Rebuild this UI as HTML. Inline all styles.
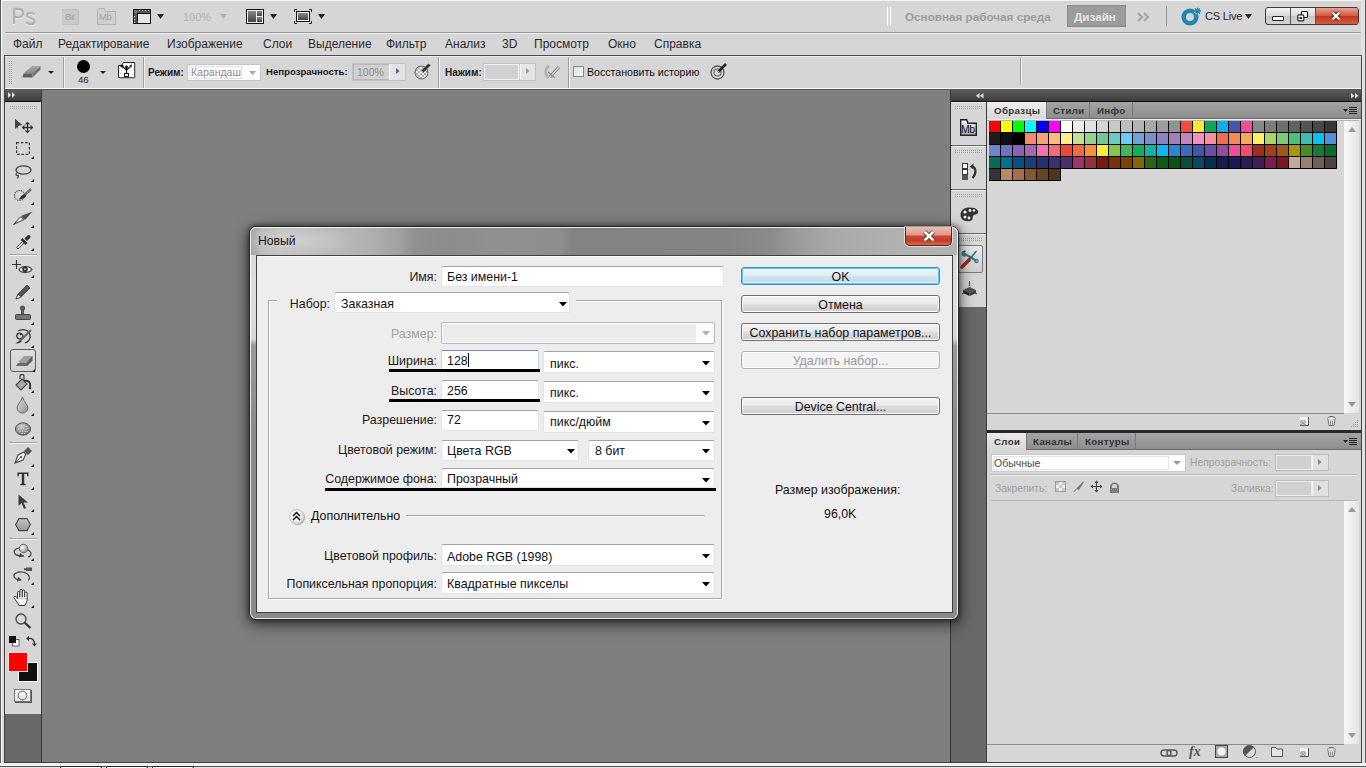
<!DOCTYPE html>
<html><head><meta charset="utf-8">
<style>
*{margin:0;padding:0;box-sizing:border-box}
html,body{width:1366px;height:768px;overflow:hidden;background:#d6d6d6;font-family:"Liberation Sans",sans-serif;color:#000}
.a{position:absolute}
.t{position:absolute;white-space:nowrap;line-height:1}
svg{position:absolute;overflow:visible}
</style></head><body>
<!-- frame -->
<div class="a" style="left:0;top:0;width:1366px;height:768px;background:#d6d6d6"></div>
<div class="a" style="left:0;top:0;width:1366px;height:1px;background:#f4f4f4"></div>
<div class="a" style="left:0;top:0;width:1px;height:768px;background:#5a5a5a"></div>
<div class="a" style="left:1px;top:1px;width:4px;height:767px;background:#dadada;border-left:1px solid #f8f8f8"></div>
<div class="a" style="left:1361px;top:0;width:5px;height:768px;background:#e2e2e2"></div>
<div class="a" style="left:1365px;top:0;width:1px;height:768px;background:#5a5a5a"></div>
<!-- app bar -->
<div class="a" style="left:5px;top:1px;width:1356px;height:31px;background:#d6d6d6"></div>
<div class="a" style="left:5px;top:32px;width:1356px;height:1px;background:#9a9a9a"></div>
<div class="a" style="left:5px;top:33px;width:1356px;height:1px;background:#ececec"></div>
<!-- menu bar -->
<div class="a" style="left:5px;top:34px;width:1356px;height:21px;background:#d6d6d6"></div>
<!-- options bar -->
<div class="a" style="left:4px;top:55px;width:1358px;height:35px;background:#d6d6d6;border:1px solid #4a4a4a;border-bottom:none"></div>
<div class="a" style="left:5px;top:56px;width:1356px;height:1px;background:#ececec"></div>
<div class="a" style="left:5px;top:88px;width:1356px;height:1px;background:#f6f6f6"></div>
<!-- workspace -->
<div class="a" style="left:4px;top:89px;width:1358px;height:674px;background:#7f7f7f;border:1px solid #404040;border-top-color:#555"></div>
<div class="a" style="left:0;top:763px;width:1366px;height:3px;background:#f0f0f0"></div>
<div class="a" style="left:0;top:766px;width:1366px;height:2px;background:#e4e4e4;border-top:1px solid #555"></div>
<div class="a" style="left:60px;top:766px;width:42px;height:2px;background:#fafafa;border:1px solid #222;border-bottom:none;border-radius:2px 2px 0 0"></div>
<div class="a" style="left:106px;top:766px;width:42px;height:2px;background:#fafafa;border:1px solid #222;border-bottom:none;border-radius:2px 2px 0 0"></div>
<div class="a" style="left:152px;top:766px;width:42px;height:2px;background:#fafafa;border:1px solid #222;border-bottom:none;border-radius:2px 2px 0 0"></div>
<!-- left dock -->
<div class="a" style="left:5px;top:90px;width:36px;height:11px;background:linear-gradient(#5c5c5c,#3c3c3c)"></div>
<div class="a" style="left:5px;top:101px;width:36px;height:1px;background:#111"></div>
<div class="a" style="left:5px;top:102px;width:36px;height:660px;background:#686868"></div>
<div class="a" style="left:41px;top:90px;width:1px;height:672px;background:#3a3a3a"></div>
<div class="a" style="left:5px;top:102px;width:36px;height:612px;background:#d6d6d6"></div>
<!-- right dock -->
<div class="a" style="left:950px;top:90px;width:411px;height:11px;background:linear-gradient(#5c5c5c,#3c3c3c)"></div>
<div class="a" style="left:950px;top:101px;width:411px;height:1px;background:#111"></div>
<div class="a" style="left:950px;top:90px;width:1px;height:672px;background:#333"></div>
<div class="a" style="left:951px;top:102px;width:36px;height:660px;background:#686868"></div>
<div class="a" style="left:986px;top:102px;width:1px;height:660px;background:#3a3a3a"></div>
<div class="a" style="left:987px;top:102px;width:374px;height:660px;background:#d6d6d6"></div><!-- APPBAR CONTENT -->
<svg style="left:11px;top:7px" width="26" height="19"><g fill="none" stroke-width="2.3" stroke-linecap="butt"><path transform="translate(0,1)" d="M3 17V2H7.5C10.5 2 12 3.5 12 6C12 8.5 10.5 10 7.5 10H3" stroke="#eeeeee"/><path transform="translate(0,1)" d="M23.5 7.5C22.5 6.3 21 5.8 19.5 5.8C17.3 5.8 16 6.8 16 8.3C16 11.5 23.5 10.5 23.5 14.2C23.5 15.9 22 17 19.5 17C17.8 17 16.2 16.4 15.3 15.3" stroke="#eeeeee"/><path d="M3 17V2H7.5C10.5 2 12 3.5 12 6C12 8.5 10.5 10 7.5 10H3" stroke="#b2b2b2"/><path d="M23.5 7.5C22.5 6.3 21 5.8 19.5 5.8C17.3 5.8 16 6.8 16 8.3C16 11.5 23.5 10.5 23.5 14.2C23.5 15.9 22 17 19.5 17C17.8 17 16.2 16.4 15.3 15.3" stroke="#b2b2b2"/></g></svg>
<div class="a" style="left:62px;top:9px;width:16px;height:15px;background:#c9c9c9;border-top:1px solid #bdbdbd;box-shadow:1px 1px 0 #bfbfbf"></div>
<div class="t" style="left:65px;top:13px;font-size:9px;font-weight:bold;color:#a8a8a8">Br</div>
<svg style="left:97px;top:8px" width="19" height="17"><path d="M0.5 2.5 V16.5 H18.5 V3.5 H8.5 L7.5 0.5 H1.5 Z" fill="#d0d0d0" stroke="#b2b2b2"/></svg>
<div class="t" style="left:99px;top:12px;font-size:9.5px;color:#a6a6a6;letter-spacing:-0.5px">Mb</div>
<svg style="left:133px;top:9px" width="19" height="16"><rect x="0" y="0" width="18" height="15" fill="#111"/><rect x="1" y="1" width="16" height="3" fill="#555"/><rect x="1" y="1" width="3" height="13" fill="#555"/><rect x="5" y="5" width="12" height="9" fill="#e6e6e6"/><g fill="#eee"><rect x="6" y="1" width="1" height="1"/><rect x="9" y="1" width="1" height="1"/><rect x="12" y="1" width="1" height="1"/><rect x="15" y="1" width="1" height="1"/><rect x="1" y="7" width="1" height="1"/><rect x="1" y="10" width="1" height="1"/><rect x="1" y="13" width="1" height="1"/></g><rect x="1" y="1" width="3" height="3" fill="#777"/></svg>
<svg style="left:157px;top:14px" width="8" height="6"><path d="M0 0H7L3.5 5Z" fill="#222"/></svg>
<div class="t" style="left:183px;top:12px;font-size:11px;color:#b3b3b3">100%</div>
<svg style="left:220px;top:14px" width="8" height="6"><path d="M0 0H7L3.5 5Z" fill="#b0b0b0"/></svg>
<svg style="left:246px;top:9px" width="19" height="16"><rect x="0.5" y="0.5" width="17" height="14" fill="#eee" stroke="#111"/><rect x="2" y="2" width="8" height="11" fill="url(#g1)"/><rect x="11" y="2" width="5" height="5" fill="url(#g1)"/><rect x="11" y="8" width="5" height="5" fill="url(#g1)"/></svg>
<svg style="left:270px;top:14px" width="8" height="6"><path d="M0 0H7L3.5 5Z" fill="#222"/></svg>
<svg style="left:294px;top:9px" width="19" height="16"><path d="M0.5 3V0.5H3M15 0.5H17.5V3M17.5 12V14.5H15M3 14.5H0.5V12" fill="none" stroke="#222"/><rect x="2.5" y="2.5" width="13" height="10" fill="#eee" stroke="#111"/><rect x="4" y="4" width="10" height="7" fill="url(#g1)"/></svg>
<svg style="left:318px;top:14px" width="8" height="6"><path d="M0 0H7L3.5 5Z" fill="#222"/></svg>
<svg width="0" height="0"><defs><linearGradient id="g1" x1="0" y1="0" x2="0" y2="1"><stop offset="0" stop-color="#888"/><stop offset="1" stop-color="#444"/></linearGradient></defs></svg>
<div class="a" style="left:887px;top:7px;width:1px;height:19px;background:#fafafa"></div>
<div class="a" style="left:890px;top:7px;width:1px;height:19px;background:#fafafa"></div>
<div class="t" style="left:905px;top:11px;font-size:11.7px;font-weight:bold;color:#9b9b9b">Основная рабочая среда</div>
<div class="a" style="left:1067px;top:5px;width:59px;height:22px;background:#9c9c9c;border:1px solid #8a8a8a"></div>
<div class="t" style="left:1074px;top:11px;font-size:11.7px;font-weight:bold;color:#e6e6e6">Дизайн</div>
<svg style="left:1137px;top:12px" width="15" height="10"><path d="M1 1L5 5L1 9M7 1L11 5L7 9" fill="none" stroke="#a6a6a6" stroke-width="2.2"/></svg>
<div class="a" style="left:1166px;top:6px;width:1px;height:20px;background:#9a9a9a"></div>
<svg style="left:1180px;top:6px" width="24" height="20"><circle cx="10" cy="11" r="6.3" fill="none" stroke="#1f86b0" stroke-width="4.6"/><circle cx="17.5" cy="5" r="3.6" fill="#d6d6d6"/><path d="M17.5 1.5V8.5M14 5H21M15 2.5L20 7.5M20 2.5L15 7.5" stroke="#1f86b0" stroke-width="1.3"/></svg>
<div class="t" style="left:1205px;top:11px;font-size:11px;color:#222;letter-spacing:-0.2px">CS Live</div>
<svg style="left:1245px;top:14px" width="8" height="6"><path d="M0 0H7L3.5 5Z" fill="#222"/></svg>
<div class="a" style="left:1265px;top:7px;width:94px;height:18px;border:1px solid #3c3c3c;border-radius:3px;overflow:hidden;background:linear-gradient(#f4f4f4,#d8d8d8 50%,#c6c6c6 51%,#d4d4d4)">
  <div class="a" style="left:24px;top:0;width:1px;height:16px;background:#555"></div>
  <div class="a" style="left:49px;top:0;width:1px;height:16px;background:#555"></div>
  <div class="a" style="left:50px;top:0;width:42px;height:16px;background:linear-gradient(#e8a193,#d2553f 50%,#c2351f 51%,#d0603c)"></div>
</div>
<div class="a" style="left:1272px;top:16px;width:12px;height:5px;background:#fff;border:1.3px solid #222;border-radius:1px"></div>
<svg style="left:1297px;top:11px" width="12" height="11"><rect x="4.5" y="0.5" width="6" height="6" rx="1" fill="#fff" stroke="#222" stroke-width="1.2"/><rect x="0.8" y="3.8" width="6" height="6" rx="1" fill="#fff" stroke="#222" stroke-width="1.2"/><rect x="2.5" y="6" width="2.5" height="2" fill="#222"/></svg>
<svg style="left:1329px;top:10px" width="14" height="12"><path d="M3.5 2.5L10.5 9.5M10.5 2.5L3.5 9.5" stroke="#4a1a12" stroke-width="4"/><path d="M3.5 2.5L10.5 9.5M10.5 2.5L3.5 9.5" stroke="#fff" stroke-width="2.4"/></svg>
<!-- MENU -->
<div class="t" style="left:13px;top:38px;font-size:12px;color:#2a2a2a">Файл</div>
<div class="t" style="left:58px;top:38px;font-size:12px;color:#2a2a2a">Редактирование</div>
<div class="t" style="left:167px;top:38px;font-size:12px;color:#2a2a2a">Изображение</div>
<div class="t" style="left:263px;top:38px;font-size:12px;color:#2a2a2a">Слои</div>
<div class="t" style="left:308px;top:38px;font-size:12px;color:#2a2a2a">Выделение</div>
<div class="t" style="left:386px;top:38px;font-size:12px;color:#2a2a2a">Фильтр</div>
<div class="t" style="left:445px;top:38px;font-size:12px;color:#2a2a2a">Анализ</div>
<div class="t" style="left:502px;top:38px;font-size:12px;color:#2a2a2a">3D</div>
<div class="t" style="left:534px;top:38px;font-size:12px;color:#2a2a2a">Просмотр</div>
<div class="t" style="left:608px;top:38px;font-size:12px;color:#2a2a2a">Окно</div>
<div class="t" style="left:654px;top:38px;font-size:12px;color:#2a2a2a">Справка</div>
<!-- OPTIONS BAR -->
<svg style="left:9px;top:61px" width="4" height="23"><g fill="#a8a8a8"><rect x="0" y="0" width="1" height="1"/></g><path d="M0.5 0V23M2.5 0V23" stroke="#a0a0a0" stroke-dasharray="1 1"/></svg>
<svg style="left:22px;top:64px" width="20" height="15"><path d="M1.5 9.5L10 2H18.5L10.5 9.5Z" fill="url(#ge1)"/><path d="M1.5 9.5H10.5V13.5H0.5Z" fill="#5e5e5e"/><path d="M10.5 9.5L18.5 2V5.5L10.5 13.5Z" fill="#707070"/></svg><svg width="0" height="0"><defs><linearGradient id="ge1" x1="0" y1="0" x2="0" y2="1"><stop offset="0" stop-color="#a8a8a8"/><stop offset="1" stop-color="#8a8a8a"/></linearGradient></defs></svg>
<svg style="left:48px;top:71px" width="7" height="4"><path d="M0 0H6L3 3Z" fill="#222"/></svg>
<div class="a" style="left:63px;top:57px;width:1px;height:31px;background:#a0a0a0"></div>
<div class="a" style="left:64px;top:57px;width:1px;height:31px;background:#f0f0f0"></div>
<div class="a" style="left:77px;top:60px;width:13px;height:13px;border-radius:50%;background:#000"></div>
<div class="t" style="left:78px;top:75px;font-size:9.6px;color:#222">46</div>
<svg style="left:100px;top:71px" width="7" height="4"><path d="M0 0H6L3 3Z" fill="#222"/></svg>
<svg style="left:118px;top:62px" width="19" height="18"><path d="M0.5 3.5H3.5L5.5 0.5H16.5V15.5H0.5Z" fill="#fafafa" stroke="#222"/><path d="M17 1.5V16H1.5" fill="none" stroke="#888"/><path d="M8.5 13V6M8.5 8L4.5 4.5M8.5 8L12.5 4.5" stroke="#111" stroke-width="1.2" fill="none"/><circle cx="4" cy="4" r="1.6" fill="#111"/><circle cx="8.5" cy="5" r="1.4" fill="#111"/><path d="M11.5 3.5L14 2.5L13.5 5.5Z" fill="#111"/><rect x="6.5" y="11.5" width="4" height="3" fill="#fafafa" stroke="#111"/></svg>
<div class="a" style="left:143px;top:57px;width:1px;height:31px;background:#a0a0a0"></div>
<div class="a" style="left:144px;top:57px;width:1px;height:31px;background:#f0f0f0"></div>
<div class="t" style="left:148px;top:68px;font-size:10px;font-weight:bold;color:#1a1a1a">Режим:</div>
<div class="a" style="left:187px;top:64px;width:74px;height:17px;background:#fff;border:1px solid #c4c4c4"></div>
<div class="a" style="left:189px;top:66px;width:53px;height:13px;border:1px solid #e2e2e2"></div>
<div class="t" style="left:191px;top:67px;font-size:10.5px;color:#8a8a8a">Карандаш</div>
<svg style="left:249px;top:71px" width="8" height="5"><path d="M0 0H7L3.5 4Z" fill="#a8a8a8"/></svg>
<div class="t" style="left:266px;top:67px;font-size:9.6px;font-weight:bold;color:#1a1a1a">Непрозрачность:</div>
<div class="a" style="left:352px;top:63px;width:54px;height:18px;background:#d0d0d0;border:1px solid #f2f2f2;outline:1px solid #b8b8b8;outline-offset:-2px"></div>
<div class="a" style="left:352px;top:63px;width:54px;height:18px;border:1px solid #c0c0c0"></div>
<div class="a" style="left:389px;top:64px;width:16px;height:16px;background:#e4e4e4;border-left:1px solid #fafafa"></div>
<div class="t" style="left:357px;top:67px;font-size:10.5px;color:#8c8c8c">100%</div>
<svg style="left:396px;top:68px" width="4" height="7"><path d="M0 0V6L3.5 3Z" fill="#5a5aa0"/></svg>
<svg style="left:414px;top:63px" width="18" height="17"><defs><pattern id="chk" width="4" height="4" patternUnits="userSpaceOnUse"><rect width="4" height="4" fill="#f4f4f4"/><rect width="2" height="2" fill="#a8a8a8"/><rect x="2" y="2" width="2" height="2" fill="#a8a8a8"/></pattern></defs><circle cx="7.5" cy="9.5" r="6.5" fill="url(#chk)" stroke="#666" stroke-width="1"/><path d="M8 9L15.5 1.5" stroke="#333" stroke-width="2.8"/><path d="M7 10L8.5 8.5" stroke="#fff" stroke-width="1.2"/></svg>
<div class="a" style="left:438px;top:57px;width:1px;height:31px;background:#a0a0a0"></div>
<div class="a" style="left:439px;top:57px;width:1px;height:31px;background:#f0f0f0"></div>
<div class="t" style="left:445px;top:68px;font-size:10px;font-weight:bold;color:#1a1a1a">Нажим:</div>
<div class="a" style="left:483px;top:63px;width:53px;height:18px;background:#d2d2d2;border:1px solid #c0c0c0"></div>
<div class="a" style="left:484px;top:64px;width:35px;height:16px;border:1px solid #f2f2f2"></div>
<div class="a" style="left:520px;top:64px;width:15px;height:16px;background:#e4e4e4;border-left:1px solid #fafafa"></div>
<svg style="left:526px;top:68px" width="4" height="7"><path d="M0 0V6L3.5 3Z" fill="#999"/></svg>
<svg style="left:544px;top:63px" width="18" height="17"><path d="M5 3A7 7 0 0 0 5 15" fill="none" stroke="#b0b0b0" stroke-width="2.5"/><path d="M6 14L15 4" stroke="#777" stroke-width="3"/><path d="M6 14L15 4" stroke="#ddd" stroke-width="1.2"/><path d="M4 9L11 15" stroke="#888" stroke-width="1.2"/></svg>
<div class="a" style="left:568px;top:57px;width:1px;height:31px;background:#a0a0a0"></div>
<div class="a" style="left:569px;top:57px;width:1px;height:31px;background:#f0f0f0"></div>
<div class="a" style="left:573px;top:66px;width:11px;height:11px;background:linear-gradient(135deg,#dcdcdc,#fafafa);border:1px solid #8a8a8a"></div>
<div class="t" style="left:587px;top:67px;font-size:10.6px;color:#111">Восстановить историю</div>
<svg style="left:710px;top:63px" width="18" height="17"><circle cx="7.5" cy="9.5" r="6.5" fill="#d8d8d8" stroke="#555" stroke-width="1.3"/><circle cx="7.5" cy="9.5" r="3.5" fill="none" stroke="#666" stroke-width="1.2"/><path d="M8 9L16 1" stroke="#222" stroke-width="2.6"/><path d="M7 10L9 8" stroke="#fff" stroke-width="1"/></svg>
<div class="a" style="left:1020px;top:58px;width:1px;height:27px;background:#a0a0a0"></div>
<div class="a" style="left:1021px;top:58px;width:1px;height:27px;background:#f0f0f0"></div>
<!-- TOOLS -->
<svg style="left:10px;top:106px" width="28" height="3"><path d="M0 0.5H28M0 2.5H28" stroke="#a6a6a6" stroke-dasharray="1 1"/></svg>
<svg style="left:6px;top:89px" width="12" height="12"><path d="M2 3L5 6L2 9ZM6 3L9 6L6 9Z" fill="#e0e0e0"/></svg>
<svg style="left:15px;top:119px" width="18" height="14"><path d="M0 0L7 6L4 6L2 10Z" fill="#3a3a3a"/><path d="M0 0V10L3 7L7 6Z" fill="#444"/><path d="M12.5 4V13M8 8.5H17" stroke="#333" stroke-width="1.3"/><path d="M10.5 5.5L12.5 3.5L14.5 5.5M10.5 11.5L12.5 13.5L14.5 11.5M9.5 6.5L7.5 8.5L9.5 10.5M15.5 6.5L17.5 8.5L15.5 10.5" fill="none" stroke="#333" stroke-width="1.1"/></svg>
<svg style="left:16px;top:142px" width="14" height="13"><rect x="0.6" y="0.6" width="12.8" height="11.8" fill="none" stroke="#333" stroke-width="1.2" stroke-dasharray="2.5 1.8"/></svg>
<svg style="left:14px;top:165px" width="18" height="14"><ellipse cx="9.5" cy="5" rx="7.5" ry="4.2" fill="none" stroke="#444" stroke-width="1.3"/><path d="M3 8C1 9 2 11 4 10.5C5 10 4 12 3.5 13.5" fill="none" stroke="#444" stroke-width="1.2"/></svg>
<svg style="left:14px;top:188px" width="18" height="14"><circle cx="5.5" cy="7.5" r="5" fill="none" stroke="#333" stroke-width="1.1" stroke-dasharray="1.1 1.1"/><path d="M5 11.5C6 9 8 6.5 11 6C12.5 6.2 12.5 8 11.5 9C10 10.5 7 11.5 5 11.5Z" fill="#2e2e2e"/><path d="M11 6.5L17 1" stroke="#666" stroke-width="2.4"/><path d="M11.5 6L16.5 1.5" stroke="#ccc" stroke-width="0.7" stroke-dasharray="1 1"/></svg>
<svg style="left:13px;top:211px" width="20" height="14"><path d="M0.5 13.5L7.5 6L11 8.5Z" fill="#f6f6f6" stroke="#3a3a3a" stroke-width="1" stroke-linejoin="round"/><path d="M8 5L19.5 0.5L12 9Z" fill="#4e4e4e"/></svg>
<svg style="left:15px;top:232px" width="17" height="17"><path d="M1.5 15.5L9 8L10.5 9.5L3 17Z" fill="#fafafa" stroke="#3a3a3a" stroke-width="1"/><path d="M6.5 7L11.5 12" stroke="#333" stroke-width="2.6"/><path d="M9.5 6.5L13 3A2 2 0 0 1 15.5 5.5L12 9Z" fill="#333"/></svg>
<div class="a" style="left:9px;top:254px;width:28px;height:1px;background:#a6a6a6"></div>
<div class="a" style="left:9px;top:255px;width:28px;height:1px;background:#f2f2f2"></div>
<svg style="left:12px;top:260px" width="21" height="14"><path d="M4.5 0V9M0 4.5H9" stroke="#333" stroke-width="1.1"/><path d="M7 9.5C9 6 17 5 20 9.5C17 13.5 9 13.5 7 9.5Z" fill="#fafafa" stroke="#333" stroke-width="1.1"/><circle cx="13" cy="9.3" r="2.8" fill="#333"/><circle cx="13" cy="9.3" r="1" fill="#bbb"/></svg>
<svg style="left:15px;top:283px" width="16" height="17"><path d="M1 16L3 11L12 2L15 5L6 14Z" fill="#555" stroke="#333" stroke-width="0.8"/><path d="M1 16L3 11L6 14Z" fill="#f0f0f0" stroke="#444" stroke-width="0.8"/></svg>
<svg style="left:15px;top:305px" width="16" height="16"><circle cx="7.5" cy="3" r="2.6" fill="#555"/><rect x="6" y="4" width="3" height="6" fill="#555"/><rect x="0.5" y="9.5" width="15" height="5" rx="1" fill="#777" stroke="#444"/></svg>
<svg style="left:14px;top:328px" width="19" height="17"><path d="M8 6C5 4 2 6 3 9C4 12 9 11 9 8C9 6 7 6 6 7M4 3C9 0 15 2 16 7C17 11 14 14 11 15" fill="none" stroke="#333" stroke-width="1.3"/><path d="M1 15C3 15 4 14 6 12L8 13C6 15 4 16 1 15Z" fill="#333"/><path d="M7 12L17 2" stroke="#666" stroke-width="2"/></svg>
<div class="a" style="left:10px;top:349px;width:26px;height:23px;border:1.3px solid #5a5a5a;border-radius:3px;background:linear-gradient(#dedede,#d2d2d2)"></div>
<svg style="left:16px;top:354px" width="17" height="14"><path d="M0 12L5 7H16L11 12Z" fill="#9c9c9c"/><path d="M5 7L10 2H16.5L16 7Z" fill="#8c8c8c"/><path d="M0 12H11V9H2Z" fill="#6a6a6a"/><path d="M11 12L16.5 6.5V2L11 8Z" fill="#5c5c5c"/><path d="M1 9L8 2H16.5L11 8H2Z" fill="#a0a0a0"/></svg>
<svg style="left:15px;top:374px" width="17" height="18"><path d="M5 5V2C5 0 9 0 9 2V9" fill="none" stroke="#444" stroke-width="1.3"/><path d="M1 11L7 5L12 10L6 16Z" fill="#aaa" stroke="#444" stroke-width="1.1"/><path d="M9 7C13 6 16 8 15 13" fill="none" stroke="#333" stroke-width="1.8"/><circle cx="15" cy="14" r="1.3" fill="#333"/></svg>
<svg style="left:17px;top:397px" width="12" height="16"><path d="M5.5 0C4 5 0 8 0 11A5.5 5 0 0 0 11 11C11 8 7 5 5.5 0Z" fill="url(#g2)" stroke="#666" stroke-width="0.9"/></svg>
<svg style="left:15px;top:422px" width="17" height="14"><defs><radialGradient id="gsp" cx="0.4" cy="0.3" r="0.8"><stop offset="0" stop-color="#c8c8c8"/><stop offset="1" stop-color="#6a6a6a"/></radialGradient></defs><ellipse cx="8" cy="7" rx="7.6" ry="6.2" fill="url(#gsp)" stroke="#4a4a4a" stroke-width="0.9"/><g fill="#eaeaea"><circle cx="4" cy="4" r="0.6"/><circle cx="6.5" cy="3" r="0.6"/><circle cx="9" cy="3.5" r="0.6"/><circle cx="11.5" cy="4.5" r="0.6"/><circle cx="3.5" cy="7" r="0.6"/><circle cx="6" cy="6" r="0.6"/><circle cx="8.5" cy="6.5" r="0.6"/><circle cx="11" cy="7" r="0.6"/><circle cx="13" cy="6.5" r="0.6"/><circle cx="5" cy="9.5" r="0.6"/><circle cx="7.5" cy="9" r="0.6"/><circle cx="10" cy="9.5" r="0.6"/><circle cx="12" cy="9.5" r="0.6"/><circle cx="7" cy="11.5" r="0.6"/><circle cx="9.5" cy="11.5" r="0.6"/></g></svg>
<div class="a" style="left:9px;top:442px;width:28px;height:1px;background:#a6a6a6"></div>
<div class="a" style="left:9px;top:443px;width:28px;height:1px;background:#f2f2f2"></div>
<svg style="left:15px;top:447px" width="17" height="17"><path d="M0 16L3 8L9 5L11 7L8 13Z" fill="#f2f2f2" stroke="#444" stroke-width="1.1"/><circle cx="6" cy="10" r="1" fill="#333"/><path d="M0 16L6 10" stroke="#444" stroke-width="0.8"/><path d="M9 4L13 0L17 4L13 8Z" fill="#555"/></svg>
<svg style="left:17px;top:472px" width="12" height="14"><path d="M0.5 0.5H11.5V4.5H10.6L9.8 2H7.2V11.6L8.8 12.3V13.2H3.2V12.3L4.8 11.6V2H2.2L1.4 4.5H0.5Z" fill="#333"/></svg>
<svg style="left:18px;top:494px" width="11" height="16"><path d="M0.5 0.5V12L3.5 9L6 15L8 14L5.5 8.5H10Z" fill="#3a3a3a"/></svg>
<svg style="left:15px;top:518px" width="16" height="14"><path d="M4 0.6H12L15.4 6.5L12 12.6H4L0.6 6.5Z" fill="url(#g3)" stroke="#444" stroke-width="1.1"/></svg>
<div class="a" style="left:9px;top:538px;width:28px;height:1px;background:#a6a6a6"></div>
<div class="a" style="left:9px;top:539px;width:28px;height:1px;background:#f2f2f2"></div>
<svg style="left:13px;top:544px" width="20" height="15"><circle cx="10.5" cy="4.5" r="4.2" fill="url(#g4)" stroke="#555" stroke-width="0.9"/><path d="M6 4C1 5 0 8 2 10C4 12 9 12 11 12" fill="none" stroke="#444" stroke-width="1.2"/><path d="M15 6C19 8 19 12 15 13" fill="none" stroke="#444" stroke-width="1.2"/><path d="M7 9L11 12L6 13.5Z" fill="#444"/></svg>
<svg style="left:13px;top:567px" width="20" height="16"><rect x="13" y="0.5" width="6" height="3.5" fill="#555"/><path d="M11 2.2H13" stroke="#555" stroke-width="2"/><path d="M6 13C1 12 -1 8 3 6C7 4 14 5 16 9C17 11 16 13 15 13" fill="none" stroke="#444" stroke-width="1.2"/><path d="M5 10L9 13L4 14.5Z" fill="#444"/></svg>
<svg style="left:13px;top:589px" width="19" height="17"><g fill="#fafafa" stroke="#333" stroke-width="1"><rect x="4.5" y="2.5" width="2.4" height="8" rx="1.2"/><rect x="6.9" y="0.5" width="2.4" height="9" rx="1.2"/><rect x="9.3" y="1" width="2.4" height="9" rx="1.2"/><rect x="11.7" y="3" width="2.4" height="8" rx="1.2"/><path d="M4.5 9L2.5 7.5C1.5 7 0.5 8 1 9L5 14.5L6 16.5H12L13 14C14 12.5 14.1 11 14.1 9.5H4.5Z"/></g><path d="M5 9H13.6" stroke="#fafafa" stroke-width="1.5"/></svg>
<svg style="left:15px;top:613px" width="17" height="16"><circle cx="6" cy="6" r="5" fill="#d8d8d8" stroke="#444" stroke-width="1.3"/><path d="M9.5 9.5L15.5 15" stroke="#333" stroke-width="2.2"/></svg>
<svg style="left:9px;top:636px" width="11" height="11"><rect x="3.5" y="3.5" width="6.5" height="6.5" fill="#fff" stroke="#444" stroke-width="0.8"/><rect x="0" y="0" width="7" height="7" fill="#111"/></svg>
<svg style="left:26px;top:636px" width="11" height="11"><path d="M2.5 2.5C6 2 8.5 4 8.5 8" fill="none" stroke="#333" stroke-width="1.4"/><path d="M0 2.5L3 0V5Z" fill="#333"/><path d="M6 7.5H11L8.5 10.5Z" fill="#333"/></svg>
<div class="a" style="left:18px;top:662px;width:20px;height:20px;background:#111;border:1px solid #fafafa"></div>
<div class="a" style="left:8px;top:652px;width:20px;height:20px;background:#f00;border:1px solid #ffd8d8"></div>
<div class="a" style="left:14px;top:689px;width:17px;height:13px;background:linear-gradient(#f8f8f8,#e0e0e0);border:1px solid #777;box-shadow:1px 1px 0 #555"></div>
<svg style="left:17px;top:690px" width="11" height="11"><circle cx="5.5" cy="5.5" r="4.3" fill="none" stroke="#555" stroke-width="0.9"/></svg>
<svg width="0" height="0"><defs>
<linearGradient id="g2" x1="0" y1="0" x2="1" y2="1"><stop offset="0" stop-color="#e8e8e8"/><stop offset="1" stop-color="#8a8a8a"/></linearGradient>
<linearGradient id="g3" x1="0" y1="0" x2="0" y2="1"><stop offset="0" stop-color="#c4c4c4"/><stop offset="1" stop-color="#999"/></linearGradient>
<radialGradient id="g4" cx="0.35" cy="0.35" r="0.7"><stop offset="0" stop-color="#fff"/><stop offset="1" stop-color="#9a9a9a"/></radialGradient>
</defs></svg>
<svg style="left:31px;top:156px" width="4" height="4"><path d="M3 0V3H0Z" fill="#111"/></svg>
<svg style="left:31px;top:179px" width="4" height="4"><path d="M3 0V3H0Z" fill="#111"/></svg>
<svg style="left:31px;top:202px" width="4" height="4"><path d="M3 0V3H0Z" fill="#111"/></svg>
<svg style="left:31px;top:225px" width="4" height="4"><path d="M3 0V3H0Z" fill="#111"/></svg>
<svg style="left:31px;top:248px" width="4" height="4"><path d="M3 0V3H0Z" fill="#111"/></svg>
<svg style="left:31px;top:275px" width="4" height="4"><path d="M3 0V3H0Z" fill="#111"/></svg>
<svg style="left:31px;top:298px" width="4" height="4"><path d="M3 0V3H0Z" fill="#111"/></svg>
<svg style="left:31px;top:322px" width="4" height="4"><path d="M3 0V3H0Z" fill="#111"/></svg>
<svg style="left:31px;top:345px" width="4" height="4"><path d="M3 0V3H0Z" fill="#111"/></svg>
<svg style="left:32px;top:369px" width="4" height="4"><path d="M3 0V3H0Z" fill="#111"/></svg>
<svg style="left:31px;top:390px" width="4" height="4"><path d="M3 0V3H0Z" fill="#111"/></svg>
<svg style="left:31px;top:413px" width="4" height="4"><path d="M3 0V3H0Z" fill="#111"/></svg>
<svg style="left:31px;top:436px" width="4" height="4"><path d="M3 0V3H0Z" fill="#111"/></svg>
<svg style="left:31px;top:464px" width="4" height="4"><path d="M3 0V3H0Z" fill="#111"/></svg>
<svg style="left:31px;top:487px" width="4" height="4"><path d="M3 0V3H0Z" fill="#111"/></svg>
<svg style="left:31px;top:509px" width="4" height="4"><path d="M3 0V3H0Z" fill="#111"/></svg>
<svg style="left:31px;top:532px" width="4" height="4"><path d="M3 0V3H0Z" fill="#111"/></svg>
<svg style="left:31px;top:558px" width="4" height="4"><path d="M3 0V3H0Z" fill="#111"/></svg>
<svg style="left:31px;top:582px" width="4" height="4"><path d="M3 0V3H0Z" fill="#111"/></svg>
<svg style="left:31px;top:605px" width="4" height="4"><path d="M3 0V3H0Z" fill="#111"/></svg>
<!-- RIGHT DOCK -->
<svg style="left:976px;top:93px" width="9" height="6"><path d="M3.5 0V5.5L0 2.75ZM7.5 0V5.5L4 2.75Z" fill="#e0e0e0"/></svg>
<svg style="left:1351px;top:93px" width="9" height="6"><path d="M0 0V5.5L3.5 2.75ZM4 0V5.5L7.5 2.75Z" fill="#e0e0e0"/></svg>
<div class="a" style="left:951px;top:102px;width:35px;height:43px;background:#d6d6d6;border-top:1px solid #ececec"></div>
<div class="a" style="left:951px;top:146px;width:35px;height:43px;background:#d6d6d6;border-top:1px solid #ececec"></div>
<div class="a" style="left:951px;top:190px;width:35px;height:43px;background:#d6d6d6;border-top:1px solid #ececec"></div>
<div class="a" style="left:951px;top:234px;width:35px;height:73px;background:#d6d6d6;border-top:1px solid #ececec"></div>
<svg style="left:955px;top:106px" width="28" height="3"><path d="M0 0.5H28M0 2.5H28" stroke="#a0a0a0" stroke-dasharray="1 1"/></svg>
<svg style="left:955px;top:150px" width="28" height="3"><path d="M0 0.5H28M0 2.5H28" stroke="#a0a0a0" stroke-dasharray="1 1"/></svg>
<svg style="left:955px;top:194px" width="28" height="3"><path d="M0 0.5H28M0 2.5H28" stroke="#a0a0a0" stroke-dasharray="1 1"/></svg>
<svg style="left:955px;top:238px" width="28" height="3"><path d="M0 0.5H28M0 2.5H28" stroke="#a0a0a0" stroke-dasharray="1 1"/></svg>
<svg style="left:960px;top:119px" width="18" height="17"><path d="M0.7 2.7V16.3H16.3V4.3H8L6.7 0.7H0.7Z" fill="url(#g5)" stroke="#222" stroke-width="1.4"/></svg>
<div class="t" style="left:961px;top:124px;font-size:10.5px;color:#111;letter-spacing:-0.6px">Mb</div>
<svg style="left:962px;top:163px" width="15" height="17"><rect x="0.5" y="0.5" width="5" height="5" fill="#fff" stroke="#333"/><rect x="0.5" y="6.5" width="5" height="5" fill="#fff" stroke="#333"/><rect x="0" y="12" width="6" height="5" fill="#555"/><path d="M10 3.5C14 4 15 10 10.5 15" fill="none" stroke="#333" stroke-width="2.2"/><path d="M7.5 3.5L11.5 0.5V6.5Z" fill="#333"/></svg>
<svg style="left:960px;top:207px" width="19" height="15"><path d="M10 0.5C17 0.5 19 4 18 6C17 8 14 7 13 9C12 11 14 13 10 14C4 15 0.5 12 0.5 8C0.5 3 4 0.5 10 0.5Z" fill="#333"/><g fill="#eee"><circle cx="5" cy="5" r="1.6"/><circle cx="10" cy="3.5" r="1.4"/><circle cx="14" cy="3.5" r="1.2"/><circle cx="5" cy="10" r="1.5"/><circle cx="9" cy="11" r="1.4"/></g></svg>
<div class="a" style="left:958px;top:245px;width:25px;height:28px;border:1px solid #7a7a7a;border-radius:2px;background:linear-gradient(#e8e8e8,#cfcfcf)"></div>
<svg style="left:960px;top:250px" width="20" height="20"><path d="M4 3.5L16 10.5" stroke="#2f8088" stroke-width="2.4" stroke-linecap="round"/><path d="M1.5 3.5C1.5 1 4 0 6 1L4.5 3.5L6.5 5C7 7 3 7.5 1.5 5Z" fill="#2f8088"/><circle cx="16.5" cy="11" r="2.2" fill="#2f8088"/><circle cx="17" cy="11" r="0.8" fill="#ddd"/><path d="M16 1.5L9 10" stroke="#2a6f90" stroke-width="1.6" stroke-linecap="round"/><path d="M9 10L2 17" stroke="#a8281e" stroke-width="3.6" stroke-linecap="round"/></svg>
<svg style="left:962px;top:281px" width="15" height="15"><path d="M7.5 0V5" stroke="#444"/><path d="M1 9L7.5 6L14 9L7.5 12Z" fill="#555"/><path d="M1 9V12L7.5 15V12Z" fill="#222"/><path d="M14 9V12L7.5 15V12Z" fill="#3a3a3a"/><path d="M0 13L2 12M15 13L13 12" stroke="#444"/></svg>
<svg width="0" height="0"><defs><linearGradient id="g5" x1="0" y1="0" x2="0" y2="1"><stop offset="0" stop-color="#f8f8f8"/><stop offset="1" stop-color="#a8a8a8"/></linearGradient></defs></svg>

<!-- SWATCH PANEL -->
<div class="a" style="left:987px;top:102px;width:374px;height:17px;background:linear-gradient(#a4a4a4,#8e8e8e);border-bottom:1px solid #6a6a6a"></div>
<div class="a" style="left:987px;top:102px;width:59px;height:18px;background:linear-gradient(#f0f0f0,#d6d6d6)"></div>
<div class="t" style="left:994px;top:106px;font-size:9.7px;font-weight:bold;letter-spacing:0.35px;color:#333">Образцы</div>
<div class="a" style="left:1046px;top:102px;width:1px;height:17px;background:#7a7a7a"></div>
<div class="t" style="left:1053px;top:106px;font-size:9.7px;font-weight:bold;letter-spacing:0.35px;color:#333">Стили</div>
<div class="a" style="left:1089px;top:102px;width:1px;height:17px;background:#7a7a7a"></div>
<div class="t" style="left:1097px;top:106px;font-size:9.7px;font-weight:bold;letter-spacing:0.35px;color:#333">Инфо</div>
<div class="a" style="left:1132px;top:102px;width:1px;height:17px;background:#7a7a7a"></div>
<svg style="left:1343px;top:107px" width="15" height="8"><path d="M0 2H5L2.5 5Z" fill="#222"/><path d="M6 0.5H14M6 2.5H14M6 4.5H14M6 6.5H14" stroke="#222"/></svg>
<div class="a" style="left:987px;top:120px;width:374px;height:293px;background:#d6d6d6"></div>
<div class="a" style="left:1344px;top:120px;width:15px;height:293px;background:linear-gradient(90deg,#f8f8f8,#e4e4e4)"></div>
<div class="a" style="left:987px;top:119px;width:374px;height:1px;background:#f0f0f0"></div>
<div class="a" style="left:987px;top:120px;width:372px;height:1px;background:#b4b4b4"></div>
<svg style="left:1348px;top:127px" width="9" height="6"><path d="M0 5H8L4 0Z" fill="#999"/></svg>
<svg style="left:1348px;top:402px" width="9" height="6"><path d="M0 0H8L4 5Z" fill="#999"/></svg>
<div class="a" style="left:987px;top:413px;width:357px;height:1px;background:#8a8a8a"></div>
<div class="a" style="left:987px;top:414px;width:374px;height:16px;background:#d6d6d6"></div>
<svg style="left:1300px;top:417px" width="10" height="10"><rect x="0" y="0" width="9" height="9" fill="#f4f4f4"/><path d="M8.5 0V8.5H0" fill="none" stroke="#555"/><rect x="1" y="4" width="4" height="4" fill="#fff" stroke="#666" stroke-width="0.8"/><path d="M2 5L4 7" stroke="#333" stroke-width="0.8"/></svg>
<svg style="left:1327px;top:416px" width="10" height="11"><ellipse cx="4.5" cy="2.5" rx="4" ry="1.8" fill="#eee" stroke="#666" stroke-width="0.9"/><path d="M3 1V0.5H6V1" stroke="#666"/><path d="M1 3.5L2 9.5H7L8 3.5" fill="#e8e8e8" stroke="#666" stroke-width="0.9"/><path d="M3.5 4.5V8.5M5.5 4.5V8.5" stroke="#777" stroke-width="0.9"/></svg>
<svg style="left:1350px;top:419px" width="9" height="9"><g fill="#999"><rect x="7" y="1" width="1" height="1"/><rect x="5" y="3" width="1" height="1"/><rect x="7" y="3" width="1" height="1"/><rect x="3" y="5" width="1" height="1"/><rect x="5" y="5" width="1" height="1"/><rect x="7" y="5" width="1" height="1"/><rect x="1" y="7" width="1" height="1"/><rect x="3" y="7" width="1" height="1"/><rect x="5" y="7" width="1" height="1"/><rect x="7" y="7" width="1" height="1"/></g></svg>
<div class="a" style="left:987px;top:430px;width:374px;height:3px;background:#2a2a2a"></div>

<!-- LAYERS PANEL -->
<div class="a" style="left:987px;top:433px;width:374px;height:17px;background:linear-gradient(#a4a4a4,#8e8e8e);border-bottom:1px solid #6a6a6a"></div>
<div class="a" style="left:987px;top:433px;width:40px;height:18px;background:linear-gradient(#eaeaea,#d6d6d6)"></div>
<div class="t" style="left:994px;top:437px;font-size:9.7px;font-weight:bold;letter-spacing:0.35px;color:#333">Слои</div>
<div class="a" style="left:1026px;top:433px;width:1px;height:17px;background:#7a7a7a"></div>
<div class="t" style="left:1033px;top:437px;font-size:9.7px;font-weight:bold;letter-spacing:0.35px;color:#333">Каналы</div>
<div class="a" style="left:1077px;top:433px;width:1px;height:17px;background:#7a7a7a"></div>
<div class="t" style="left:1085px;top:437px;font-size:9.7px;font-weight:bold;letter-spacing:0.35px;color:#333">Контуры</div>
<div class="a" style="left:1135px;top:433px;width:1px;height:17px;background:#7a7a7a"></div>
<svg style="left:1343px;top:438px" width="15" height="8"><path d="M0 2H5L2.5 5Z" fill="#222"/><path d="M6 0.5H14M6 2.5H14M6 4.5H14M6 6.5H14" stroke="#222"/></svg>
<div class="a" style="left:991px;top:454px;width:195px;height:18px;background:#fff;border:1px solid #c8c8c8"></div>
<div class="a" style="left:993px;top:456px;width:176px;height:14px;border:1px solid #e4e4e4"></div>
<div class="t" style="left:994px;top:458px;font-size:10.5px;color:#4a4a4a">Обычные</div>
<svg style="left:1173px;top:461px" width="9" height="5"><path d="M0 0H8L4 4Z" fill="#999"/></svg>
<div class="t" style="left:1190px;top:458px;font-size:10.3px;color:#a0a0a0">Непрозрачность:</div>
<div class="a" style="left:1275px;top:454px;width:54px;height:17px;background:#d0d0d0;border:1px solid #bcbcbc"></div>
<div class="a" style="left:1276px;top:455px;width:36px;height:15px;border:1px solid #ececec"></div>
<div class="a" style="left:1312px;top:455px;width:16px;height:15px;background:#e0e0e0;border-left:1px solid #f4f4f4"></div>
<svg style="left:1318px;top:459px" width="4" height="7"><path d="M0 0V6L3.5 3Z" fill="#888"/></svg>
<div class="a" style="left:991px;top:474px;width:366px;height:1px;background:#b8b8b8"></div>
<div class="a" style="left:991px;top:475px;width:366px;height:1px;background:#ececec"></div>
<div class="t" style="left:995px;top:484px;font-size:10.3px;color:#a0a0a0">Закрепить:</div>
<svg style="left:1055px;top:481px" width="11" height="11"><rect x="0.5" y="0.5" width="10" height="10" fill="#f0f0f0" stroke="#999"/><g fill="#c8c8c8"><rect x="1" y="1" width="3" height="3"/><rect x="7" y="1" width="3" height="3"/><rect x="4" y="4" width="3" height="3"/><rect x="1" y="7" width="3" height="3"/><rect x="7" y="7" width="3" height="3"/></g></svg>
<svg style="left:1072px;top:481px" width="13" height="12"><path d="M1 11C3 11 4 9 5 8L7 9L12 1L11 0.5L5 7Z" fill="#777"/></svg>
<svg style="left:1090px;top:480px" width="13" height="13"><path d="M6.5 1V12M1 6.5H12" stroke="#444" stroke-width="1.2"/><path d="M4.5 3L6.5 0.5L8.5 3ZM4.5 10L6.5 12.5L8.5 10ZM3 4.5L0.5 6.5L3 8.5ZM10 4.5L12.5 6.5L10 8.5Z" fill="#444"/></svg>
<svg style="left:1109px;top:482px" width="11" height="12"><path d="M1 6V4.5A4.5 4 0 0 1 10 4.5V6Z" fill="#777"/><path d="M3 6V4.5A2.5 2.5 0 0 1 8 4.5V6Z" fill="#d6d6d6"/><rect x="1" y="6" width="9" height="5" fill="#777"/><g fill="#999"><rect x="2" y="7" width="1" height="1"/><rect x="4" y="7" width="1" height="1"/><rect x="6" y="7" width="1" height="1"/><rect x="8" y="7" width="1" height="1"/><rect x="3" y="9" width="1" height="1"/><rect x="5" y="9" width="1" height="1"/><rect x="7" y="9" width="1" height="1"/></g></svg>
<div class="t" style="left:1231px;top:484px;font-size:10.3px;color:#a0a0a0">Заливка:</div>
<div class="a" style="left:1275px;top:480px;width:54px;height:17px;background:#d0d0d0;border:1px solid #bcbcbc"></div>
<div class="a" style="left:1276px;top:481px;width:36px;height:15px;border:1px solid #ececec"></div>
<div class="a" style="left:1312px;top:481px;width:16px;height:15px;background:#e0e0e0;border-left:1px solid #f4f4f4"></div>
<svg style="left:1318px;top:485px" width="4" height="7"><path d="M0 0V6L3.5 3Z" fill="#888"/></svg>
<div class="a" style="left:991px;top:500px;width:366px;height:1px;background:#b8b8b8"></div>
<div class="a" style="left:987px;top:501px;width:374px;height:243px;background:#d6d6d6"></div>
<div class="a" style="left:1344px;top:501px;width:15px;height:243px;background:linear-gradient(90deg,#f8f8f8,#e4e4e4)"></div>
<svg style="left:1348px;top:507px" width="9" height="6"><path d="M0 5H8L4 0Z" fill="#999"/></svg>
<svg style="left:1348px;top:733px" width="9" height="6"><path d="M0 0H8L4 5Z" fill="#999"/></svg>
<div class="a" style="left:987px;top:744px;width:357px;height:1px;background:#8a8a8a"></div>
<div class="a" style="left:987px;top:745px;width:374px;height:17px;background:#d6d6d6"></div>
<svg style="left:1159px;top:748px" width="20" height="10"><path d="M5 2H9A3 3 0 0 1 9 8H5A3 3 0 0 1 5 2ZM11 2H15A3 3 0 0 1 15 8H11A3 3 0 0 1 11 2Z" fill="none" stroke="#555" stroke-width="1.4"/></svg>
<div class="t" style="left:1189px;top:745px;font-family:'Liberation Serif',serif;font-style:italic;font-weight:bold;font-size:14px;color:#555">fx</div>
<svg style="left:1215px;top:745px" width="14" height="14"><rect x="0.5" y="0.5" width="12" height="12" fill="#aaa" stroke="#444"/><circle cx="6.5" cy="6.5" r="4" fill="#f4f4f4"/></svg>
<svg style="left:1243px;top:745px" width="16" height="14"><circle cx="6.5" cy="6.5" r="6" fill="#ddd" stroke="#555"/><path d="M11 2L2 11A6 6 0 0 1 11 2Z" fill="#555"/><path d="M13 12L15 12L14 13Z" fill="#666"/></svg>
<svg style="left:1271px;top:746px" width="13" height="11"><path d="M0.5 1.5H5L6 3H11.5V10.5H0.5Z" fill="#e6e6e6" stroke="#555"/></svg>
<svg style="left:1300px;top:748px" width="10" height="10"><rect x="0" y="0" width="9" height="9" fill="#f4f4f4"/><path d="M8.5 0V8.5H0" fill="none" stroke="#555"/><rect x="1" y="4" width="4" height="4" fill="#fff" stroke="#666" stroke-width="0.8"/><path d="M2 5L4 7" stroke="#333" stroke-width="0.8"/></svg>
<svg style="left:1327px;top:747px" width="10" height="11"><ellipse cx="4.5" cy="2.5" rx="4" ry="1.8" fill="#eee" stroke="#666" stroke-width="0.9"/><path d="M3 1V0.5H6V1" stroke="#666"/><path d="M1 3.5L2 9.5H7L8 3.5" fill="#e8e8e8" stroke="#666" stroke-width="0.9"/><path d="M3.5 4.5V8.5M5.5 4.5V8.5" stroke="#777" stroke-width="0.9"/></svg>
<!-- SWATCHES -->
<svg style="left:989px;top:121px" width="348" height="60"><rect x="0" y="0" width="348" height="48" fill="#000"/><rect x="0" y="48" width="72" height="12" fill="#000"/><rect x="0" y="0" width="11" height="11" fill="#ff0000"/><rect x="12" y="0" width="11" height="11" fill="#ffff00"/><rect x="24" y="0" width="11" height="11" fill="#00ff00"/><rect x="36" y="0" width="11" height="11" fill="#00ffff"/><rect x="48" y="0" width="11" height="11" fill="#0000ff"/><rect x="60" y="0" width="11" height="11" fill="#ff00ff"/><rect x="72" y="0" width="11" height="11" fill="#ffffff"/><rect x="84" y="0" width="11" height="11" fill="#ebebeb"/><rect x="96" y="0" width="11" height="11" fill="#e0e0e0"/><rect x="108" y="0" width="11" height="11" fill="#d4d4d4"/><rect x="120" y="0" width="11" height="11" fill="#c8c8c8"/><rect x="132" y="0" width="11" height="11" fill="#bdbdbd"/><rect x="144" y="0" width="11" height="11" fill="#b3b3b3"/><rect x="156" y="0" width="11" height="11" fill="#a8a8a8"/><rect x="168" y="0" width="11" height="11" fill="#9d9d9d"/><rect x="180" y="0" width="11" height="11" fill="#929292"/><rect x="192" y="0" width="11" height="11" fill="#f04b3c"/><rect x="204" y="0" width="11" height="11" fill="#fbea33"/><rect x="216" y="0" width="11" height="11" fill="#0ea65b"/><rect x="228" y="0" width="11" height="11" fill="#0bafef"/><rect x="240" y="0" width="11" height="11" fill="#4456a8"/><rect x="252" y="0" width="11" height="11" fill="#f04c9e"/><rect x="264" y="0" width="11" height="11" fill="#878787"/><rect x="276" y="0" width="11" height="11" fill="#7b7b7b"/><rect x="288" y="0" width="11" height="11" fill="#6e6e6e"/><rect x="300" y="0" width="11" height="11" fill="#616161"/><rect x="312" y="0" width="11" height="11" fill="#545454"/><rect x="324" y="0" width="11" height="11" fill="#474747"/><rect x="336" y="0" width="11" height="11" fill="#363636"/><rect x="0" y="12" width="11" height="11" fill="#1c1c1c"/><rect x="12" y="12" width="11" height="11" fill="#0e0e0e"/><rect x="24" y="12" width="11" height="11" fill="#000000"/><rect x="36" y="12" width="11" height="11" fill="#f7896d"/><rect x="48" y="12" width="11" height="11" fill="#f9a273"/><rect x="60" y="12" width="11" height="11" fill="#fdbb83"/><rect x="72" y="12" width="11" height="11" fill="#fff08c"/><rect x="84" y="12" width="11" height="11" fill="#c3df95"/><rect x="96" y="12" width="11" height="11" fill="#97d190"/><rect x="108" y="12" width="11" height="11" fill="#74c69a"/><rect x="120" y="12" width="11" height="11" fill="#6ccac2"/><rect x="132" y="12" width="11" height="11" fill="#6ccbf6"/><rect x="144" y="12" width="11" height="11" fill="#6fa1db"/><rect x="156" y="12" width="11" height="11" fill="#7d8dc9"/><rect x="168" y="12" width="11" height="11" fill="#8882c0"/><rect x="180" y="12" width="11" height="11" fill="#a57fbd"/><rect x="192" y="12" width="11" height="11" fill="#c087bf"/><rect x="204" y="12" width="11" height="11" fill="#f58fc0"/><rect x="216" y="12" width="11" height="11" fill="#f7909a"/><rect x="228" y="12" width="11" height="11" fill="#f26d50"/><rect x="240" y="12" width="11" height="11" fill="#f58a54"/><rect x="252" y="12" width="11" height="11" fill="#f9a75b"/><rect x="264" y="12" width="11" height="11" fill="#fff066"/><rect x="276" y="12" width="11" height="11" fill="#a7d667"/><rect x="288" y="12" width="11" height="11" fill="#7acb73"/><rect x="300" y="12" width="11" height="11" fill="#4ebf7e"/><rect x="312" y="12" width="11" height="11" fill="#3fbdb3"/><rect x="324" y="12" width="11" height="11" fill="#0ec0f0"/><rect x="336" y="12" width="11" height="11" fill="#5291d6"/><rect x="0" y="24" width="11" height="11" fill="#6d86c8"/><rect x="12" y="24" width="11" height="11" fill="#7171bd"/><rect x="24" y="24" width="11" height="11" fill="#8666b4"/><rect x="36" y="24" width="11" height="11" fill="#a667b0"/><rect x="48" y="24" width="11" height="11" fill="#f570b0"/><rect x="60" y="24" width="11" height="11" fill="#f26b7a"/><rect x="72" y="24" width="11" height="11" fill="#ee483d"/><rect x="84" y="24" width="11" height="11" fill="#f26b3b"/><rect x="96" y="24" width="11" height="11" fill="#f7923b"/><rect x="108" y="24" width="11" height="11" fill="#fbee3a"/><rect x="120" y="24" width="11" height="11" fill="#87c653"/><rect x="132" y="24" width="11" height="11" fill="#45b55a"/><rect x="144" y="24" width="11" height="11" fill="#11b15a"/><rect x="156" y="24" width="11" height="11" fill="#13b3a0"/><rect x="168" y="24" width="11" height="11" fill="#0cb8ef"/><rect x="180" y="24" width="11" height="11" fill="#2a88d0"/><rect x="192" y="24" width="11" height="11" fill="#3e6bbb"/><rect x="204" y="24" width="11" height="11" fill="#4456a7"/><rect x="216" y="24" width="11" height="11" fill="#6a4fa2"/><rect x="228" y="24" width="11" height="11" fill="#914ca0"/><rect x="240" y="24" width="11" height="11" fill="#f04c9d"/><rect x="252" y="24" width="11" height="11" fill="#f24b6c"/><rect x="264" y="24" width="11" height="11" fill="#9d2e1b"/><rect x="276" y="24" width="11" height="11" fill="#a04415"/><rect x="288" y="24" width="11" height="11" fill="#9d5a16"/><rect x="300" y="24" width="11" height="11" fill="#a3980d"/><rect x="312" y="24" width="11" height="11" fill="#4c8a2a"/><rect x="324" y="24" width="11" height="11" fill="#1b7a34"/><rect x="336" y="24" width="11" height="11" fill="#066d30"/><rect x="0" y="36" width="11" height="11" fill="#086b57"/><rect x="12" y="36" width="11" height="11" fill="#036f8f"/><rect x="24" y="36" width="11" height="11" fill="#0b4f80"/><rect x="36" y="36" width="11" height="11" fill="#1b3f77"/><rect x="48" y="36" width="11" height="11" fill="#24336d"/><rect x="60" y="36" width="11" height="11" fill="#3a3070"/><rect x="72" y="36" width="11" height="11" fill="#4e2f6d"/><rect x="84" y="36" width="11" height="11" fill="#9a3669"/><rect x="96" y="36" width="11" height="11" fill="#9a2f3f"/><rect x="108" y="36" width="11" height="11" fill="#7a1a0a"/><rect x="120" y="36" width="11" height="11" fill="#7a300a"/><rect x="132" y="36" width="11" height="11" fill="#7f4008"/><rect x="144" y="36" width="11" height="11" fill="#7f6a05"/><rect x="156" y="36" width="11" height="11" fill="#2d6416"/><rect x="168" y="36" width="11" height="11" fill="#0b5d16"/><rect x="180" y="36" width="11" height="11" fill="#075418"/><rect x="192" y="36" width="11" height="11" fill="#0b4c3a"/><rect x="204" y="36" width="11" height="11" fill="#074a63"/><rect x="216" y="36" width="11" height="11" fill="#062c58"/><rect x="228" y="36" width="11" height="11" fill="#111e52"/><rect x="240" y="36" width="11" height="11" fill="#171b57"/><rect x="252" y="36" width="11" height="11" fill="#2a1c52"/><rect x="264" y="36" width="11" height="11" fill="#431d56"/><rect x="276" y="36" width="11" height="11" fill="#7c1c4e"/><rect x="288" y="36" width="11" height="11" fill="#7a1725"/><rect x="300" y="36" width="11" height="11" fill="#c4ab90"/><rect x="312" y="36" width="11" height="11" fill="#978070"/><rect x="324" y="36" width="11" height="11" fill="#6e6058"/><rect x="336" y="36" width="11" height="11" fill="#4e4440"/><rect x="0" y="48" width="11" height="11" fill="#333333"/><rect x="12" y="48" width="11" height="11" fill="#b88a66"/><rect x="24" y="48" width="11" height="11" fill="#a2714b"/><rect x="36" y="48" width="11" height="11" fill="#87582f"/><rect x="48" y="48" width="11" height="11" fill="#6b4322"/><rect x="60" y="48" width="11" height="11" fill="#523518"/></svg>

<!-- DIALOG -->
<div class="a" style="left:249px;top:226px;width:710px;height:394px;border-radius:7px;box-shadow:0 0 4px 1px rgba(0,0,0,0.4), 0 4px 14px 2px rgba(0,0,0,0.5)"></div>
<div class="a" style="left:249px;top:226px;width:710px;height:394px;border:1px solid #262626;border-radius:7px;overflow:hidden;background:linear-gradient(180deg,#d4d4d4 0px,#dedede 60px,#d8d8d8 112px,#9a9a9a 118px,#8a8a8a 200px,#8a8a8a 100%)">
  <div class="a" style="left:0;top:0;width:708px;height:28px;background:radial-gradient(ellipse 60px 16px at 45px 14px,rgba(220,220,220,0.6),rgba(220,220,220,0) 100%),linear-gradient(90deg,#a0a0a0 0px,#bababa 12px,#c2c2c2 30px,#bcbcbc 60px,#b8b8b8 90px,#b0b0b0 120px,#a0a0a0 150px,#909090 165px,#8c8c8c 200px,#909090 240px,#8e8e8e 310px,#838383 322px,#848484 480px,#8a8a8a 520px,#9a9a9a 545px,#a8a8a8 580px,#b0b0b0 640px,#b4b4b4 708px)"></div>
  <div class="a" style="left:0;top:0;width:708px;height:392px;border:1px solid rgba(255,255,255,0.8);border-radius:6px"></div>
</div>
<div class="t" style="left:258px;top:235px;font-size:12.2px;color:#1a1a1a">Новый</div>
<div class="a" style="left:905px;top:227px;width:47px;height:19px;border:1px solid #4a2a24;border-top:none;border-radius:0 0 5px 5px;background:linear-gradient(#ecc0b4 0%,#e09888 42%,#c84a32 52%,#c43e26 75%,#d46a4e 100%);box-shadow:0 0 0 1px rgba(255,255,255,0.55)"></div>
<svg style="left:922px;top:230px" width="14" height="12"><path d="M2.5 1.5L11.5 10.5M11.5 1.5L2.5 10.5" stroke="#5a2018" stroke-width="4.2"/><path d="M2.5 1.5L11.5 10.5M11.5 1.5L2.5 10.5" stroke="#fff" stroke-width="2.6"/></svg>
<div class="a" style="left:256px;top:255px;width:697px;height:358px;background:#ededed;border:1px solid #404040"></div>
<div class="a" style="left:257px;top:256px;width:695px;height:1px;background:#fafafa"></div>
<!-- group box -->
<div class="a" style="left:268px;top:300px;width:454px;height:299px;border:1px solid #a8a8a8;box-shadow:1px 1px 0 #fff inset, 1px 1px 0 #fff"></div>
<div class="a" style="left:277px;top:295px;width:299px;height:12px;background:#ededed"></div>
<div class="t" style="right:929px;top:271px;font-size:12.4px;color:#1a1a1a">Имя:</div>
<div class="a" style="left:441px;top:266px;width:283px;height:21px;background:#fff;border:1px solid #e2e3e6;border-top-color:#a3a3a3;border-radius:2px"></div>
<div class="t" style="left:447px;top:271px;font-size:12.4px;color:#111">Без имени-1</div>
<div class="t" style="right:1036px;top:298px;font-size:12.4px;color:#1a1a1a">Набор:</div>
<div class="a" style="left:334px;top:292px;width:236px;height:21px;background:#fff;border:1px solid #e2e3e6;border-top-color:#a3a3a3;border-radius:2px"></div>
<div class="t" style="left:341px;top:298px;font-size:12.4px;color:#111">Заказная</div>
<svg style="left:559px;top:302px" width="8" height="5"><path d="M0 0H8L4 4.5Z" fill="#000"/></svg>
<div class="t" style="right:929px;top:328px;font-size:12.4px;color:#a0a0a0">Размер:</div>
<div class="a" style="left:441px;top:322px;width:274px;height:22px;background:#ebebeb;border:1px solid #b8b8b8;border-radius:2px;box-shadow:inset 0 0 0 1px #fafafa"></div>
<div class="a" style="left:696px;top:323px;width:18px;height:20px;background:#fbfbfb"></div>
<svg style="left:702px;top:331px" width="8" height="5"><path d="M0 0H8L4 4.5Z" fill="#b0b0b0"/></svg>
<div class="t" style="right:929px;top:355px;font-size:12.4px;color:#1a1a1a">Ширина:</div>
<div class="a" style="left:441px;top:350px;width:98px;height:20px;background:#fff;border:1px solid #e2e3e6;border-top-color:#6d8fb0;border-left-color:#c5d5e5;border-right-color:#c5d5e5;border-radius:2px"></div>
<div class="t" style="left:447px;top:355px;font-size:12.4px;color:#111">128</div>
<div class="a" style="left:468px;top:353px;width:1px;height:14px;background:#000"></div>
<div class="a" style="left:389px;top:369px;width:151px;height:3px;background:#000"></div>
<div class="a" style="left:543px;top:351px;width:172px;height:22px;background:#fff;border:1px solid #e2e3e6;border-top-color:#a3a3a3;border-radius:2px"></div>
<div class="t" style="left:550px;top:358px;font-size:12.4px;color:#111">пикс.</div>
<svg style="left:702px;top:361px" width="8" height="5"><path d="M0 0H8L4 4.5Z" fill="#000"/></svg>
<div class="t" style="right:929px;top:385px;font-size:12.4px;color:#1a1a1a">Высота:</div>
<div class="a" style="left:441px;top:380px;width:98px;height:20px;background:#fff;border:1px solid #e2e3e6;border-top-color:#a3a3a3;border-radius:2px"></div>
<div class="t" style="left:447px;top:385px;font-size:12.4px;color:#111">256</div>
<div class="a" style="left:389px;top:399px;width:151px;height:3px;background:#000"></div>
<div class="a" style="left:543px;top:381px;width:172px;height:22px;background:#fff;border:1px solid #e2e3e6;border-top-color:#a3a3a3;border-radius:2px"></div>
<div class="t" style="left:550px;top:387px;font-size:12.4px;color:#111">пикс.</div>
<svg style="left:702px;top:391px" width="8" height="5"><path d="M0 0H8L4 4.5Z" fill="#000"/></svg>
<div class="t" style="right:929px;top:414px;font-size:12.4px;color:#1a1a1a">Разрешение:</div>
<div class="a" style="left:441px;top:410px;width:98px;height:21px;background:#fff;border:1px solid #e2e3e6;border-top-color:#a3a3a3;border-radius:2px"></div>
<div class="t" style="left:447px;top:414px;font-size:12.4px;color:#111">72</div>
<div class="a" style="left:543px;top:411px;width:172px;height:22px;background:#fff;border:1px solid #e2e3e6;border-top-color:#a3a3a3;border-radius:2px"></div>
<div class="t" style="left:550px;top:416px;font-size:12.4px;color:#111">пикс/дюйм</div>
<svg style="left:702px;top:421px" width="8" height="5"><path d="M0 0H8L4 4.5Z" fill="#000"/></svg>
<div class="t" style="right:929px;top:444px;font-size:12.4px;color:#1a1a1a">Цветовой режим:</div>
<div class="a" style="left:441px;top:440px;width:138px;height:21px;background:#fff;border:1px solid #e2e3e6;border-top-color:#a3a3a3;border-radius:2px"></div>
<div class="t" style="left:447px;top:445px;font-size:12.4px;color:#111">Цвета RGB</div>
<svg style="left:567px;top:449px" width="8" height="5"><path d="M0 0H8L4 4.5Z" fill="#000"/></svg>
<div class="a" style="left:588px;top:440px;width:127px;height:21px;background:#fff;border:1px solid #e2e3e6;border-top-color:#a3a3a3;border-radius:2px"></div>
<div class="t" style="left:595px;top:445px;font-size:12.4px;color:#111">8 бит</div>
<svg style="left:702px;top:449px" width="8" height="5"><path d="M0 0H8L4 4.5Z" fill="#000"/></svg>
<div class="t" style="right:929px;top:473px;font-size:12.4px;color:#1a1a1a">Содержимое фона:</div>
<div class="a" style="left:441px;top:468px;width:274px;height:20px;background:#fff;border:1px solid #e2e3e6;border-top-color:#a3a3a3;border-radius:2px"></div>
<div class="t" style="left:447px;top:473px;font-size:12.4px;color:#111">Прозрачный</div>
<svg style="left:702px;top:478px" width="8" height="5"><path d="M0 0H8L4 4.5Z" fill="#000"/></svg>
<div class="a" style="left:325px;top:488px;width:391px;height:3px;background:#000"></div>
<div class="a" style="left:289px;top:509px;width:15px;height:15px;border-radius:50%;border:1px solid #c4c4c4;background:radial-gradient(circle at 40% 35%,#ffffff,#ececec 60%,#d0d0d0);box-shadow:1px 1px 1px #aaa"></div>
<svg style="left:292px;top:511px" width="9" height="10"><path d="M1 5L4.5 1.5L8 5M1 9L4.5 5.5L8 9" fill="none" stroke="#111" stroke-width="1.5"/></svg>
<div class="t" style="left:311px;top:510px;font-size:12.4px;color:#111">Дополнительно</div>
<div class="a" style="left:406px;top:515px;width:299px;height:1px;background:#a8a8a8"></div>
<div class="a" style="left:406px;top:516px;width:299px;height:1px;background:#fafafa"></div>
<div class="t" style="right:929px;top:550px;font-size:12.4px;color:#1a1a1a">Цветовой профиль:</div>
<div class="a" style="left:441px;top:544px;width:274px;height:22px;background:#fff;border:1px solid #e2e3e6;border-top-color:#a3a3a3;border-radius:2px"></div>
<div class="t" style="left:447px;top:551px;font-size:12.4px;color:#111">Adobe RGB (1998)</div>
<svg style="left:702px;top:554px" width="8" height="5"><path d="M0 0H8L4 4.5Z" fill="#000"/></svg>
<div class="t" style="right:929px;top:578px;font-size:12.4px;color:#1a1a1a">Попиксельная пропорция:</div>
<div class="a" style="left:441px;top:572px;width:274px;height:22px;background:#fff;border:1px solid #e2e3e6;border-top-color:#a3a3a3;border-radius:2px"></div>
<div class="t" style="left:447px;top:578px;font-size:12.4px;color:#111">Квадратные пикселы</div>
<svg style="left:702px;top:582px" width="8" height="5"><path d="M0 0H8L4 4.5Z" fill="#000"/></svg>
<div class="a" style="left:741px;top:267px;width:199px;height:18px;background:linear-gradient(#eef5f9 0%,#e0edf4 48%,#cde2ec 52%,#c2dbe7 100%);border:1px solid #3c8fc1;border-radius:3px;box-shadow:inset 0 0 0 1px #5ac8f0, inset 0 0 0 2px #e0f4fc;"></div>
<div class="t" style="left:741px;top:271px;width:199px;text-align:center;font-size:12.4px;color:#111">OK</div>
<div class="a" style="left:741px;top:295px;width:199px;height:18px;background:linear-gradient(#f2f2f2 0%,#ebebeb 45%,#dddddd 50%,#cfcfcf 100%);border:1px solid #707070;border-radius:3px;box-shadow:inset 0 0 0 1px #fcfcfc;"></div>
<div class="t" style="left:741px;top:299px;width:199px;text-align:center;font-size:12.4px;color:#111">Отмена</div>
<div class="a" style="left:741px;top:323px;width:199px;height:18px;background:linear-gradient(#f2f2f2 0%,#ebebeb 45%,#dddddd 50%,#cfcfcf 100%);border:1px solid #707070;border-radius:3px;box-shadow:inset 0 0 0 1px #fcfcfc;"></div>
<div class="t" style="left:741px;top:327px;width:199px;text-align:center;font-size:12.4px;color:#111">Сохранить набор параметров...</div>
<div class="a" style="left:741px;top:351px;width:199px;height:18px;background:#f4f4f4;border:1px solid #adb2b5;border-radius:3px;box-shadow:inset 0 0 0 1px #fcfcfc;"></div>
<div class="t" style="left:741px;top:355px;width:199px;text-align:center;font-size:12.4px;color:#9a9a9a">Удалить набор...</div>
<div class="a" style="left:741px;top:397px;width:199px;height:18px;background:linear-gradient(#f2f2f2 0%,#ebebeb 45%,#dddddd 50%,#cfcfcf 100%);border:1px solid #707070;border-radius:3px;box-shadow:inset 0 0 0 1px #fcfcfc;"></div>
<div class="t" style="left:741px;top:401px;width:199px;text-align:center;font-size:12.4px;color:#111">Device Central...</div>
<div class="t" style="left:775px;top:484px;font-size:12.4px;color:#111">Размер изображения:</div>
<div class="t" style="left:824px;top:508px;font-size:12.4px;color:#111">96,0K</div>
</body></html>
